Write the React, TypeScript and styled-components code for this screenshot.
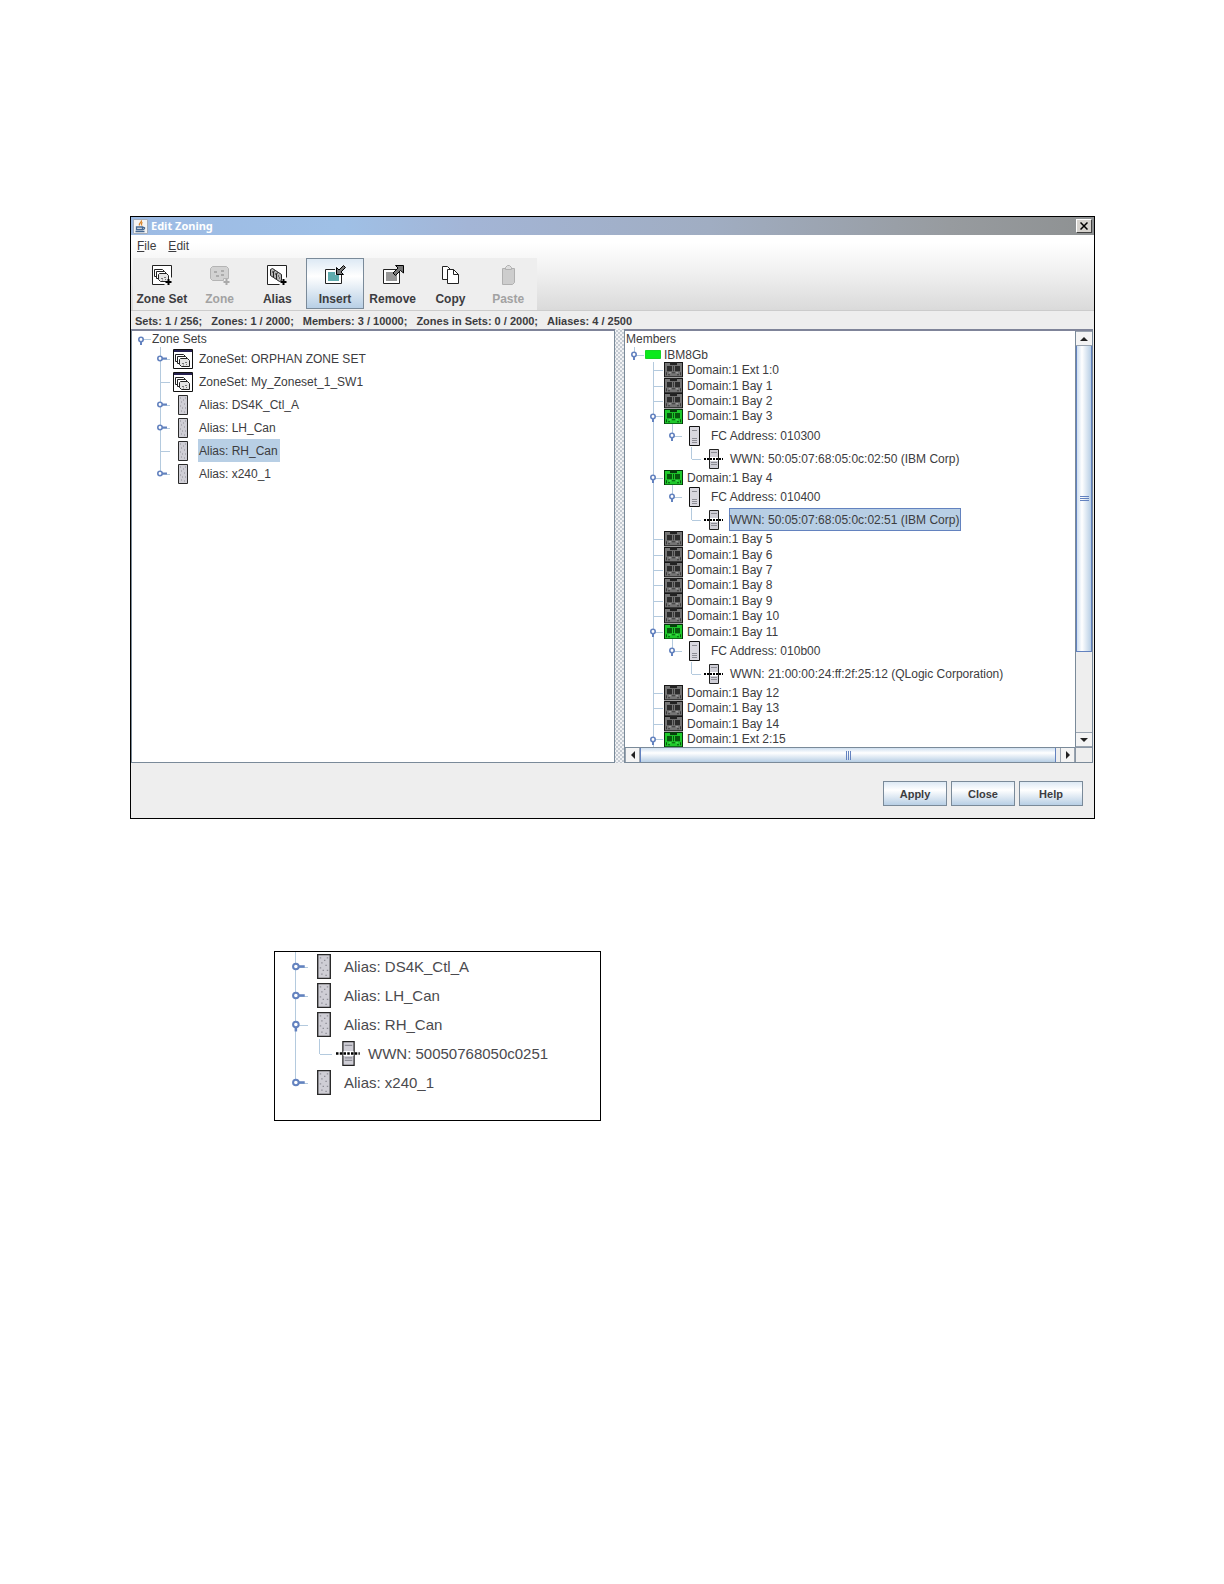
import React from "react";
import styled, { createGlobalStyle, css } from "styled-components";

const Global = createGlobalStyle`
  *, *::before, *::after { box-sizing: border-box; }
  body { margin: 0; background: #fff; }
  button { font: inherit; color: inherit; }
`;

const Page = styled.main`
  padding: 216px 129px 120px 130px;
  font-family: "Liberation Sans", Arial, sans-serif;
  font-size: 12px;
  color: #3c3c40;
`;

const Window = styled.section`
  border: 1px solid #000;
  background: #eee;
`;

const TitleBar = styled.header`
  display: flex;
  align-items: center;
  gap: 3px;
  height: 18px;
  padding: 0 2px;
  background: linear-gradient(90deg, #9dbbe4 0%, #9fc0e6 22%, #a3b5d6 35%, #a0adc2 60%, #979b9f 85%, #8e9192 100%);
`;

const Title = styled.h1`
  flex: 1;
  margin: 0;
  font-family: "Noto Sans", sans-serif;
  font-size: 11px;
  line-height: 16px;
  font-weight: 700;
  color: #fff;
`;

const CloseBox = styled.button`
  display: grid;
  place-items: center;
  width: 16px;
  height: 14px;
  padding: 0;
  background: #d6d3ce;
  border: 1px solid;
  border-color: #fff #404040 #404040 #fff;
  color: #000;
`;

const Head = styled.div`
  background: linear-gradient(#fff 10%, #f0f0f0 50%, #dadada);
  border-bottom: 1px solid #ccc;
`;

const MenuBar = styled.nav`
  display: flex;
  gap: 12px;
  height: 23px;
  padding: 0 6px 2px;
`;

const MenuButton = styled.button`
  padding: 0;
  border: 0;
  background: none;
  &::first-letter { text-decoration: underline; }
`;

const Toolbar = styled.div`
  display: grid;
  grid-template-columns: repeat(7, 1fr);
  width: 404px;
  height: 52px;
  margin-left: 2px;
  background: #eee;
`;

const ToolButton = styled.button<{ $active?: boolean }>`
  display: flex;
  flex-direction: column;
  align-items: center;
  gap: 5px;
  height: 51px;
  padding: 6px 0 0;
  border: 1px solid transparent;
  background: none;
  font-weight: 700;
  line-height: 16px;
  white-space: nowrap;
  &:disabled { color: #a2a2a2; }
  ${(p) => p.$active && css`
    border-color: #7a8a99;
    background: linear-gradient(#dde9f4, #fff 35%, #b8cfe5);
  `}
`;

const Status = styled.p`
  display: flex;
  gap: 9px;
  margin: 0;
  height: 18px;
  padding: 0 4px;
  font-size: 11px;
  font-weight: 700;
  line-height: 20px;
  white-space: nowrap;
`;

const Split = styled.div`
  display: grid;
  grid-template-columns: 484px 9px 1fr;
  height: 434px;
  padding-right: 1px;
`;

const Pane = styled.div`
  display: grid;
  grid-template-columns: minmax(0, 1fr) auto;
  grid-template-rows: minmax(0, 1fr) auto;
  border: 1px solid #7a8a99;
  border-top: 2px solid #7f8499;
  background: #fff;
`;

const Divider = styled.div`
  background-color: #f1f2f4;
  background-image: radial-gradient(circle, #a4adba 0 0.5px, transparent 1px), radial-gradient(circle, #a4adba 0 0.5px, transparent 1px);
  background-size: 4px 4px;
  background-position: 0 0, 2px 2px;
`;

type Scale = { unit: number; icon: number; gap: number };

const List = styled.ul`
  display: flex;
  flex-direction: column;
  margin: 0;
  padding: 0;
  list-style: none;
  overflow: hidden;
`;

const Item = styled.li<{ $h: number; $grow?: boolean }>`
  display: flex;
  align-items: center;
  flex: ${(p) => (p.$grow ? 1 : 0)} 0 ${(p) => p.$h}px;
  min-height: 0;
  white-space: nowrap;
`;

const Guide = styled.span<{ $w: number; $line: string }>`
  position: relative;
  flex: none;
  align-self: stretch;
  display: flex;
  align-items: center;
  justify-content: center;
  width: ${(p) => p.$w}px;
  &::before {
    content: "";
    position: absolute;
    left: calc(50% - 1px);
    top: ${(p) => (p.$line === "below" ? "50%" : 0)};
    bottom: ${(p) => (p.$line === "last" ? "50%" : 0)};
    width: 1px;
    background: ${(p) => (p.$line === "none" ? "none" : "#b4cade")};
  }
  svg { position: relative; flex: none; }
`;

const Dash = styled.span`
  position: absolute;
  left: 50%;
  right: 0;
  top: 50%;
  height: 1px;
  background: #b4cade;
`;

const IconBox = styled.span<{ $w: number; $left: number; $right: number }>`
  display: flex;
  flex: none;
  align-items: center;
  justify-content: center;
  align-self: stretch;
  width: ${(p) => p.$w}px;
  margin: 0 ${(p) => p.$right}px 0 ${(p) => p.$left}px;
  svg { flex: none; }
`;

const Label = styled.span<{ $selected?: boolean; $outlined?: boolean }>`
  display: flex;
  align-items: center;
  align-self: stretch;
  padding: 0 2px 0 1px;
  ${(p) => p.$selected && css`background: #b8cfe5;`}
  ${(p) => p.$outlined && css`box-shadow: inset 0 0 0 1px #6382bf;`}
`;

const VBar = styled.div`
  display: flex;
  flex-direction: column;
  width: 17px;
  border-left: 1px solid #7a8a99;
  background: #eee;
`;

const HBar = styled.div`
  display: flex;
  height: 15px;
  border-top: 1px solid #7a8a99;
  background: #eee;
`;

const Corner = styled.div`
  border: 1px solid #8a96a4;
  border-width: 1px 0 0 1px;
  background: #eee;
`;

const Arrow = styled.button<{ $vertical?: boolean }>`
  display: grid;
  place-items: center;
  flex: none;
  width: ${(p) => (p.$vertical ? "auto" : "15px")};
  height: ${(p) => (p.$vertical ? "15px" : "auto")};
  padding: 0;
  border: 1px solid #9aa4b0;
  border-width: ${(p) => (p.$vertical ? "1px 0" : "0 1px")};
  background: #f4f4f4;
`;

const VThumb = styled.div`
  display: grid;
  place-items: center;
  flex: 307 1 0;
  border: 1px solid #6382bf;
  border-width: 0 1px 1px;
  background: linear-gradient(90deg, #cfdff0, #fff 35%, #b8cfe5);
`;

const HThumb = styled.div`
  display: grid;
  place-items: center;
  flex: 1;
  margin-right: 4px;
  border: 1px solid #6382bf;
  border-width: 0 1px;
  background: linear-gradient(#cfdff0, #fff 35%, #b8cfe5);
`;

const TrackRest = styled.div`
  flex: 80 1 0;
`;

const Footer = styled.footer`
  display: flex;
  justify-content: flex-end;
  gap: 4px;
  padding: 18px 11px 12px;
`;

const PushButton = styled.button`
  width: 64px;
  height: 25px;
  padding: 0;
  border: 1px solid #7a8a99;
  background: linear-gradient(#dde9f4, #fff 35%, #b8cfe5);
  font-size: 11px;
  font-weight: 700;
`;

const Inset = styled.section`
  width: 327px;
  margin: 132px 0 0 144px;
  padding: 0 9px 23px;
  border: 1px solid #000;
  font-size: 15px;
  color: #4a4a4e;
`;

/* ---------- drawings ---------- */

const ZoneCards = ({ x = 0, y = 0 }) => (
  <g transform={`translate(${x} ${y})`} fill="#fff" stroke="#222">
    <path d="M1.5 .5h8l2 2v5h-10z" />
    <path d="M3.5 2.5h8l2 2v5h-10z" />
    <path d="M5.5 5.500l1-1h7l2 2v6h-8l-2-2z" fill="#e4e4e4" />
    <path d="M8 9.5h2M11 8.5h2M9 11h1M12 10.5h1" stroke="#777" />
  </g>
);

const Plus = ({ color = "#000" }) => (
  <path d="M17.500 14v6M14.500 17h6" stroke={color} strokeWidth="2" fill="none" />
);

const toolSvg = { width: 22, height: 21, viewBox: "0 0 22 21", "aria-hidden": true } as const;

const ZoneSetTool = () => (
  <svg {...toolSvg}>
    <path d="M13.500 19.500h-12v-19h19v12" fill="#fff" stroke="#222" />
    <ZoneCards x={2} y={4} />
    <Plus />
  </svg>
);

const ZoneTool = () => (
  <svg {...toolSvg}>
    <path d="M1.500 3.500l2-2h14l2 2v10h-5v2h-11l-2-2z" fill="#d2d2d2" stroke="#b4b4b4" />
    <path d="M5 7h3M12 6h3M7 11h3M12 10h3" stroke="#a0a0a0" strokeWidth="1.500" />
    <Plus color="#aaa" />
  </svg>
);

const AliasTool = () => (
  <svg {...toolSvg}>
    <path d="M13.500 19.500h-12v-19h19v12" fill="#fff" stroke="#222" />
    <g fill="#b4b4b4" stroke="#222">
      <path d="M4.500 4.500l2-1 3 2v6l-2 1-3-2z" />
      <path d="M7.500 6.500l2-1 3 2v6l-2 1-3-2z" />
      <path d="M10.500 8.500l2-1 3 2v6l-2 1-3-2z" />
    </g>
    <path d="M6 7h1M9 9h1M12 11h1M13 13h1" stroke="#222" />
    <Plus />
  </svg>
);

const InsertTool = () => (
  <svg {...toolSvg}>
    <path d="M1.500 4.500h16v14h-16z" fill="#fff" stroke="#222" />
    <path d="M4 7h11v9H4z" fill="#5fabad" />
    <path d="M11 0h11v5l-3 5h-8z" fill="#eef4fa" />
    <path d="M12.500 2.500v7h7L17 7l4.500-4.500L19.500.5 15 5z" fill="#777" stroke="#000" />
  </svg>
);

const RemoveTool = () => (
  <svg {...toolSvg}>
    <path d="M1.500 4.500h16v14h-16z" fill="#fff" stroke="#222" />
    <path d="M4 7h11v9H4z" fill="#989898" />
    <path d="M21.500.5h-8L16 3l-5 5 2.500 2.500 5-5L21.500 8z" fill="#777" stroke="#000" />
  </svg>
);

const CopyTool = () => (
  <svg {...toolSvg}>
    <path d="M3.500 1.500h5l3 3v10h-8z" fill="#fff" stroke="#222" />
    <path d="M8.500 4.500h6l5 5v9h-11z" fill="#fff" stroke="#222" />
    <path d="M14.500 4.500v5h5" fill="none" stroke="#222" />
  </svg>
);

const PasteTool = () => (
  <svg {...toolSvg}>
    <path d="M5.500 3.500h12v14l-2 2h-10z" fill="#cdcdcd" stroke="#b0b0b0" />
    <path d="M8.500 4.500v-2l2-2h2l2 2v2z" fill="#ddd" stroke="#b0b0b0" />
  </svg>
);

const JavaLogo = () => (
  <svg width="15" height="15" viewBox="0 0 15 15" aria-hidden="true">
    <path d="M.5.500h14v14H.5z" fill="#f4f4f4" stroke="#a4adba" />
    <path d="M8 1.500c2 1.500-3 2.500-1.500 5M9.500 3.500c-1.500 1-1.500 1.500-.5 3" stroke="#d9852b" strokeWidth="1.300" fill="none" />
    <path d="M3.500 8h6v2.500h-6zM9.500 8.500c3.500-.5 2 2 .2 2M2.500 12.500h9" stroke="#456892" strokeWidth="1.300" fill="none" />
  </svg>
);

type IconKind = "zoneset" | "alias" | "switch" | "port" | "portOn" | "device" | "wwn";

const TreeIcon = ({ kind, big }: { kind: IconKind; big?: boolean }) => {
  const k = big ? 1.25 : 1;
  if (kind === "zoneset")
    return (
      <svg width="20" height="20" viewBox="0 0 20 20" aria-hidden="true">
        <path d="M.5.500h19v19H.5z" fill="#fff" stroke="#111" />
        <path d="M1 1h18v2H1z" fill="#25204f" />
        <ZoneCards x={1} y={5} />
      </svg>
    );
  if (kind === "alias")
    return (
      <svg width={big ? 14 : 10} height={20 * k} viewBox="0 0 10 20" preserveAspectRatio="none" aria-hidden="true">
        <path d="M.5.500h9v19h-9z" fill="#cfced5" stroke="#2a2a2a" />
        <path d="M2 3h1M5 5h1M7 3h1M3 7h1M6 9h1M2 11h1M7 13h1M4 13h1M3 16h1M6 17h1" stroke="#8e8e96" />
      </svg>
    );
  if (kind === "switch")
    return (
      <svg width="16" height="9" viewBox="0 0 16 9" aria-hidden="true">
        <path d="M.5.500h15v8H.5z" fill="#0bea1c" stroke="#18d424" />
      </svg>
    );
  if (kind === "port" || kind === "portOn") {
    const on = kind === "portOn";
    return (
      <svg width="19" height="100%" viewBox="0 0 19 15" preserveAspectRatio="none" aria-hidden="true">
        <path d="M0 0h19v15H0z" fill={on ? "#04330a" : "#161616"} />
        <path d="M1 1h17v13H1z" fill={on ? "#1fc92c" : "#757575"} />
        <path d="M6 0h7v3H6z" fill={on ? "#063f0c" : "#222"} />
        <path d="M3 4h5v5H3zM11 4h5v5h-5z" fill={on ? "#07590d" : "#2c2c2c"} />
        <path d="M2 10h1v3H2zM8 10h3v1H8zM16 10h1v3h-1zM4 12h2v1H4zM13 12h2v1h-2zM9 4h1v5H9z" fill={on ? "#07590d" : "#3c3c3c"} />
        <path d="M5 10h2v1H5zM12 10h2v1h-2z" fill={on ? "#4be456" : "#a8a8a8"} />
      </svg>
    );
  }
  if (kind === "device")
    return (
      <svg width="11" height="20" viewBox="0 0 11 20" aria-hidden="true">
        <path d="M.5.500h10v19H.5z" fill="#d9d8df" stroke="#111" />
        <path d="M3 4.500h5M3 12.500h5M3 14.500h5M3 16.500h5" stroke="#8c8c94" />
      </svg>
    );
  return (
    <svg width={19 * k} height={20 * k} viewBox="0 0 19 20" aria-hidden="true">
      <path d="M5.500.5h9v19h-9z" fill="#cfced6" stroke="#222" />
      <path d="M7 3.500h6M7 13.500h6M7 15.500h6" stroke="#8c8c94" />
      <path d="M6 8h8v4H6z" fill="#fff" />
      <path d="M0 10h19" stroke="#000" strokeWidth="2" strokeDasharray="2 1" />
    </svg>
  );
};

const Handle = ({ open, big }: { open: boolean; big?: boolean }) => {
  const s = big ? 19 : 15;
  return (
    <svg width={s} height={s} viewBox="0 0 15 15" aria-hidden="true">
      <path d={open ? "M7 8v5" : "M8 7.500h6"} stroke="#6382bf" strokeWidth="2" />
      <circle cx="7" cy="7.500" r="2.200" fill="#fff" stroke="#6382bf" strokeWidth="1.600" />
    </svg>
  );
};

/* ---------- tree ---------- */

type Node = {
  text: string;
  kind?: IconKind;
  /* one entry per indent level: "full", "last", "below" or "none" */
  guides?: string[];
  handle?: "open" | "closed";
  selected?: boolean;
  outlined?: boolean;
};

const SMALL: Scale = { unit: 19, icon: 20, gap: 6 };
const BIG: Scale = { unit: 24, icon: 24, gap: 7 };

const metrics = (kind: IconKind | undefined, s: Scale, big?: boolean) => {
  if (kind === "switch") return { w: 16, l: 1, r: 2 };
  if (kind === "port" || kind === "portOn") return { w: 19, l: 1, r: 3 };
  if (kind === "zoneset" || (kind === "alias" && !big)) return { w: 20, l: 3, r: 5 };
  if (big) return { w: s.icon, l: 4, r: s.gap };
  return { w: s.icon, l: 2, r: s.gap };
};

const Tree = ({ nodes, label, big }: { nodes: Node[]; label: string; big?: boolean }) => {
  const s = big ? BIG : SMALL;
  return (
    <List role="tree" aria-label={label}>
      {nodes.map((n) => {
        const guides = n.guides ?? [];
        const m = metrics(n.kind, s, big);
        const compact = n.kind === "port" || n.kind === "portOn" || n.kind === "switch";
        const height = big ? 29 : compact ? 15 : n.kind ? 23 : 16;
        return (
          <Item key={n.text} $h={height} $grow={compact} role="treeitem" aria-selected={!!n.selected}>
            {guides.map((g, i) => {
              const own = i === guides.length - 1;
              return (
                <Guide key={i} $w={s.unit} $line={g}>
                  {own && <Dash />}
                  {own && n.handle && <Handle open={n.handle === "open"} big={big} />}
                </Guide>
              );
            })}
            {n.kind && (
              <IconBox $w={m.w} $left={m.l} $right={m.r}>
                <TreeIcon kind={n.kind} big={big} />
              </IconBox>
            )}
            <Label $selected={n.selected} $outlined={n.outlined}>{n.text}</Label>
          </Item>
        );
      })}
    </List>
  );
};

const zoneSets: Node[] = [
  { text: "Zone Sets", guides: ["none"], handle: "open" },
  { text: "ZoneSet: ORPHAN ZONE SET", kind: "zoneset", guides: ["none", "full"], handle: "closed" },
  { text: "ZoneSet: My_Zoneset_1_SW1", kind: "zoneset", guides: ["none", "full"] },
  { text: "Alias: DS4K_Ctl_A", kind: "alias", guides: ["none", "full"], handle: "closed" },
  { text: "Alias: LH_Can", kind: "alias", guides: ["none", "full"], handle: "closed" },
  { text: "Alias: RH_Can", kind: "alias", guides: ["none", "full"], selected: true },
  { text: "Alias: x240_1", kind: "alias", guides: ["none", "last"], handle: "closed" },
];

const port = (name: string): Node => ({ text: `Domain:1 ${name}`, kind: "port", guides: ["none", "full"] });

const portOn = (name: string): Node => ({
  text: `Domain:1 ${name}`,
  kind: "portOn",
  guides: ["none", "full"],
  handle: "open",
});

const attached = (address: string, wwn: string, selected?: boolean): Node[] => [
  { text: `FC Address: ${address}`, kind: "device", guides: ["none", "full", "last"], handle: "open" },
  {
    text: `WWN: ${wwn}`,
    kind: "wwn",
    guides: ["none", "full", "none", "last"],
    selected,
    outlined: selected,
  },
];

const members: Node[] = [
  { text: "Members" },
  { text: "IBM8Gb", kind: "switch", guides: ["last"], handle: "open" },
  port("Ext 1:0"),
  port("Bay 1"),
  port("Bay 2"),
  portOn("Bay 3"),
  ...attached("010300", "50:05:07:68:05:0c:02:50 (IBM Corp)"),
  portOn("Bay 4"),
  ...attached("010400", "50:05:07:68:05:0c:02:51 (IBM Corp)", true),
  ...["5", "6", "7", "8", "9", "10"].map((n) => port(`Bay ${n}`)),
  portOn("Bay 11"),
  ...attached("010b00", "21:00:00:24:ff:2f:25:12 (QLogic Corporation)"),
  port("Bay 12"),
  port("Bay 13"),
  port("Bay 14"),
  portOn("Ext 2:15"),
];

const aliases: Node[] = [
  { text: "Alias: DS4K_Ctl_A", kind: "alias", guides: ["full"], handle: "closed" },
  { text: "Alias: LH_Can", kind: "alias", guides: ["full"], handle: "closed" },
  { text: "Alias: RH_Can", kind: "alias", guides: ["full"], handle: "open" },
  { text: "WWN: 50050768050c0251", kind: "wwn", guides: ["full", "last"] },
  { text: "Alias: x240_1", kind: "alias", guides: ["last"], handle: "closed" },
];

const tools = [
  { name: "Zone Set", Icon: ZoneSetTool },
  { name: "Zone", Icon: ZoneTool, disabled: true },
  { name: "Alias", Icon: AliasTool },
  { name: "Insert", Icon: InsertTool, active: true },
  { name: "Remove", Icon: RemoveTool },
  { name: "Copy", Icon: CopyTool },
  { name: "Paste", Icon: PasteTool, disabled: true },
];

const counts = [
  "Sets: 1 / 256;",
  "Zones: 1 / 2000;",
  "Members: 3 / 10000;",
  "Zones in Sets: 0 / 2000;",
  "Aliases: 4 / 2500",
];

const arrows = {
  up: "M0 6l4-4 4 4z",
  down: "M0 2l4 4 4-4z",
  left: "M6 0L2 4l4 4z",
  right: "M2 0l4 4-4 4z",
};

const ArrowMark = ({ dir }: { dir: keyof typeof arrows }) => (
  <svg width="8" height="8" viewBox="0 0 8 8" aria-hidden="true">
    <path d={arrows[dir]} fill="#222" />
  </svg>
);

const Grip = ({ vertical }: { vertical?: boolean }) => (
  <svg width="9" height="9" viewBox="0 0 9 9" aria-hidden="true">
    <path d={vertical ? "M0 2.500h9M0 4.500h9M0 6.500h9" : "M2.500 0v9M4.500 0v9M6.500 0v9"} stroke="#6382bf" />
  </svg>
);

export default function App() {
  return (
    <Page>
      <Global />
      <Window>
        <TitleBar>
          <JavaLogo />
          <Title>Edit Zoning</Title>
          <CloseBox aria-label="Close window">
            <svg width="8" height="8" viewBox="0 0 8 8" aria-hidden="true">
              <path d="M.5.500l7 7M7.500.5l-7 7" stroke="#000" strokeWidth="1.500" />
            </svg>
          </CloseBox>
        </TitleBar>
        <Head>
          <MenuBar>
            <MenuButton>File</MenuButton>
            <MenuButton>Edit</MenuButton>
          </MenuBar>
          <Toolbar role="toolbar">
            {tools.map(({ name, Icon, disabled, active }) => (
              <ToolButton key={name} disabled={disabled} $active={active}>
                <Icon />
                {name}
              </ToolButton>
            ))}
          </Toolbar>
        </Head>
        <Status>
          {counts.map((c) => (
            <span key={c}>{c}</span>
          ))}
        </Status>
        <Split>
          <Pane>
            <Tree nodes={zoneSets} label="Zone Sets" />
          </Pane>
          <Divider />
          <Pane>
            <Tree nodes={members} label="Members" />
            <VBar>
              <Arrow $vertical aria-label="Scroll up"><ArrowMark dir="up" /></Arrow>
              <VThumb><Grip vertical /></VThumb>
              <TrackRest />
              <Arrow $vertical aria-label="Scroll down"><ArrowMark dir="down" /></Arrow>
            </VBar>
            <HBar>
              <Arrow aria-label="Scroll left"><ArrowMark dir="left" /></Arrow>
              <HThumb><Grip /></HThumb>
              <Arrow aria-label="Scroll right"><ArrowMark dir="right" /></Arrow>
            </HBar>
            <Corner />
          </Pane>
        </Split>
        <Footer>
          <PushButton>Apply</PushButton>
          <PushButton>Close</PushButton>
          <PushButton>Help</PushButton>
        </Footer>
      </Window>
      <Inset>
        <Tree nodes={aliases} label="Aliases" big />
      </Inset>
    </Page>
  );
}
